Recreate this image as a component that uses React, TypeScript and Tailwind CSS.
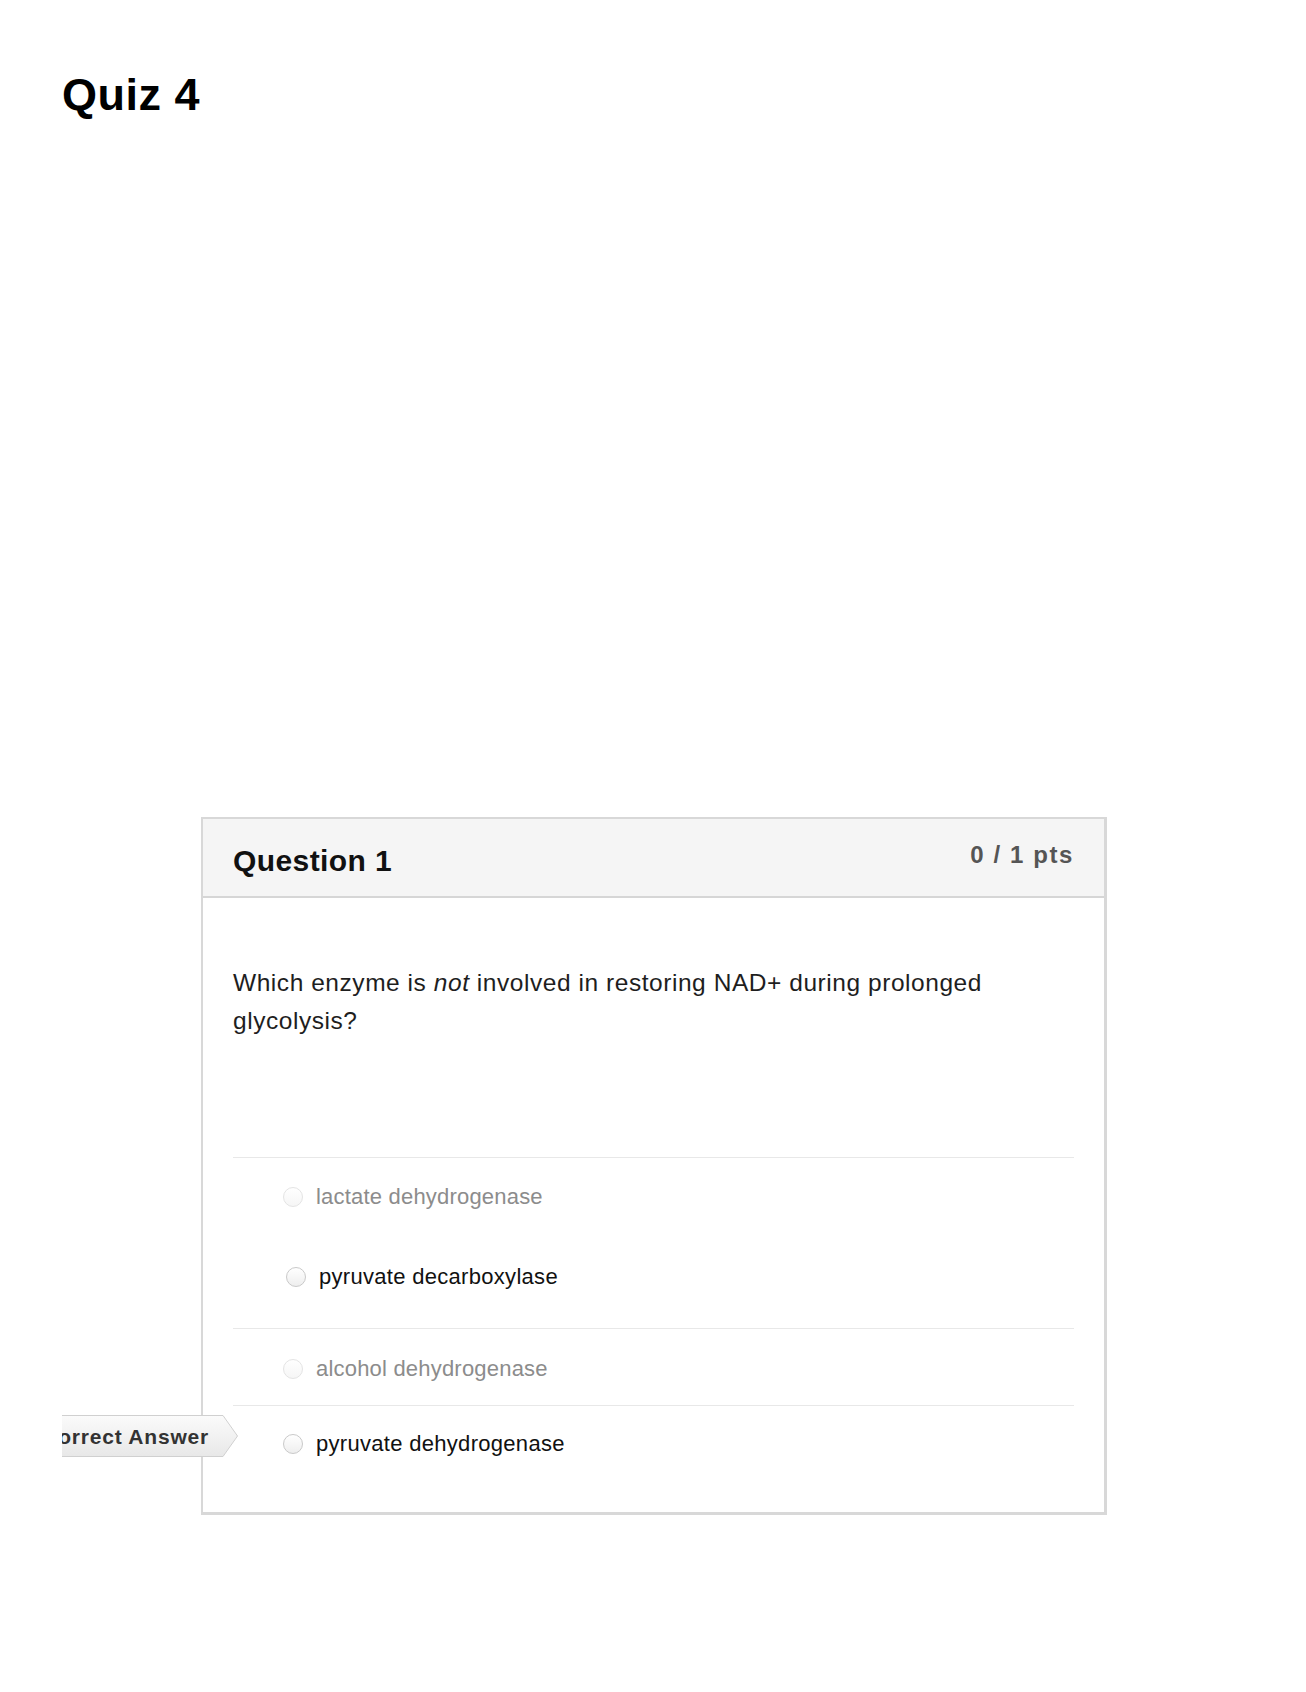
import React from "react";

type Choice = {
  label: string;
  muted: boolean;
};

function Radio({ muted }: { muted: boolean }) {
  return (
    <span
      className={
        muted
          ? "block h-[20px] w-[20px] shrink-0 rounded-full border border-[#e4e4e4] bg-gradient-to-b from-white to-[#f6f6f6]"
          : "block h-[20px] w-[20px] shrink-0 rounded-full border border-[#c9c9c9] bg-gradient-to-b from-white to-[#eeeeee]"
      }
    />
  );
}

function ChoiceLine({ choice }: { choice: Choice }) {
  return (
    <div className="flex h-[22px] items-center gap-[13px] pl-[50px]">
      <Radio muted={choice.muted} />
      <span
        className={
          choice.muted
            ? "whitespace-nowrap text-[22px] leading-[22px] tracking-[0.2px] text-[#8c8c8c]"
            : "whitespace-nowrap text-[22px] leading-[22px] tracking-[0.3px] text-[#111111]"
        }
      >
        {choice.label}
      </span>
    </div>
  );
}

function CorrectTag() {
  return (
    <div className="absolute left-[-185px] top-[9px] h-[42px] w-[190px]">
      <svg width="190" height="42" viewBox="0 0 190 42" className="absolute inset-0">
        <defs>
          <linearGradient id="tagFill" x1="0" y1="0" x2="0" y2="1">
            <stop offset="0" stopColor="#fbfbfb" />
            <stop offset="1" stopColor="#e8e8e8" />
          </linearGradient>
        </defs>
        <polygon
          points="0.5,0.5 175,0.5 189.5,21 175,41.5 0.5,41.5"
          fill="url(#tagFill)"
          stroke="#d0d0d0"
          strokeWidth="1"
        />
      </svg>
      <div className="relative flex h-full items-center justify-end pr-[29px]">
        <span className="shrink-0 whitespace-nowrap text-[21px] font-bold leading-[21px] tracking-[0.8px] text-[#333333]">
          Correct Answer
        </span>
      </div>
    </div>
  );
}

export default function App() {
  return (
    <div className="min-h-[1692px] bg-white font-['Liberation_Sans',Arial,sans-serif]">
      <div className="ml-[62px] overflow-hidden pt-[72px] pb-[176px]">
        <h1 className="text-[45px] font-bold leading-[45px] tracking-[0.5px] text-black">Quiz 4</h1>

        <div className="ml-[139px] mt-[700px] w-[906px] border-b-[3px] border-l-2 border-r-[3px] border-t-2 border-[#d8d8d8] bg-white">
          {/* header */}
          <div className="flex h-[79px] items-start justify-between border-b-2 border-[#d6d6d6] bg-[#f5f5f5] px-[30px]">
            <h2 className="pt-[27px] text-[30px] font-bold leading-[30px] tracking-[0.4px] text-[#111111]">
              Question 1
            </h2>
            <div className="pt-[24px] text-[24px] font-bold leading-[24px] tracking-[1.6px] text-[#555555]">
              0 / 1 pts
            </div>
          </div>

          {/* body */}
          <div className="px-[30px]">
            <div className="border-b border-[#e8e8e8] pb-[117px] pt-[66px]">
              <p className="text-[24.5px] leading-[38px] tracking-[0.55px] text-[#1e1e1e]">
                Which enzyme is <em>not</em> involved in restoring NAD+ during prolonged glycolysis?
              </p>
            </div>

            <div className="h-[78px] pt-[28px]">
              <ChoiceLine choice={{ label: "lactate dehydrogenase", muted: true }} />
            </div>
            <div className="h-[93px] border-b border-[#e8e8e8] pl-[3px] pt-[30px]">
              <ChoiceLine choice={{ label: "pyruvate decarboxylase", muted: false }} />
            </div>
            <div className="h-[77px] border-b border-[#e8e8e8] pt-[29px]">
              <ChoiceLine choice={{ label: "alcohol dehydrogenase", muted: true }} />
            </div>
            <div className="relative h-[106px] pt-[27px]">
              <CorrectTag />
              <ChoiceLine choice={{ label: "pyruvate dehydrogenase", muted: false }} />
            </div>
          </div>
        </div>
      </div>
    </div>
  );
}
